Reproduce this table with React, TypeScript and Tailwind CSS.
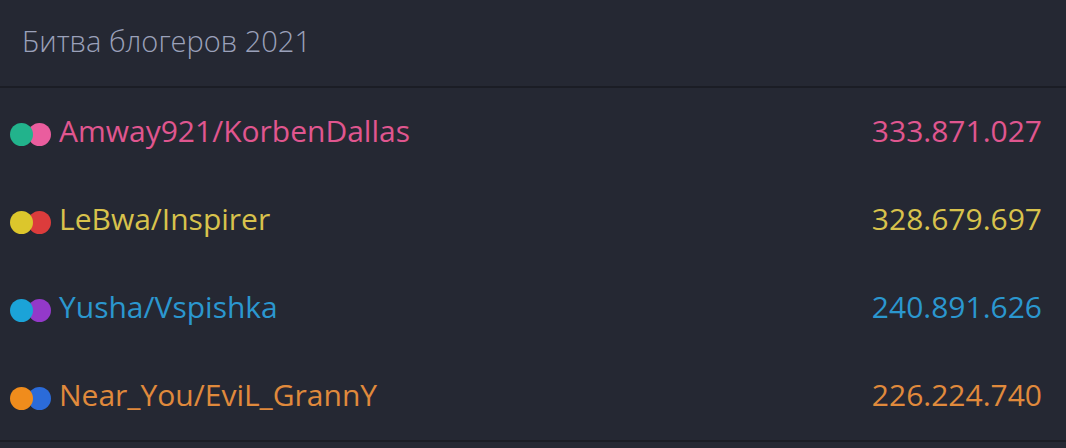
const rows = [
  { name: "Amway921/KorbenDallas", votes: "333.871.027", text: "text-[#e0568f]", a: "bg-[#22b38c]", b: "bg-[#ea5d9e]" },
  { name: "LeBwa/Inspirer", votes: "328.679.697", text: "text-[#d8c24c]", a: "bg-[#dcc62c]", b: "bg-[#dc3c3c]" },
  { name: "Yusha/Vspishka", votes: "240.891.626", text: "text-[#2b97cf]", a: "bg-[#1ba3d8]", b: "bg-[#9339c9]" },
  { name: "Near_You/EviL_GrannY", votes: "226.224.740", text: "text-[#e08a3c]", a: "bg-[#f08c1c]", b: "bg-[#2b6bd9]" },
];

export default function App() {
  return (
    <div className="w-[1066px] h-[448px] bg-[#252833] font-['Open_Sans',sans-serif] overflow-hidden">
      <div className="h-[88px] flex items-center pl-[22px] border-b-2 border-[#1b1d25]">
        <h1 className="text-[29px] font-light text-[#9ba1ba] -mt-[4px]">Битва блогеров 2021</h1>
      </div>
      <ul>
        {rows.map((r) => (
          <li key={r.name} className="h-[88px] flex items-center justify-between pl-[10px] pr-[24px]">
            <div className="flex items-center">
              <span className="flex mr-[8px] mt-[4px]">
                <span className={`w-[23px] h-[23px] rounded-full ${r.a} relative z-10`} />
                <span className={`w-[23px] h-[23px] rounded-full ${r.b} -ml-[5px]`} />
              </span>
              <span className={`text-[30px] -mt-[3px] ${r.text}`}>{r.name}</span>
            </div>
            <span className={`text-[30px] -mt-[3px] ${r.text}`}>{r.votes}</span>
          </li>
        ))}
      </ul>
      <div className="border-t-2 border-[#1b1d25]" />
    </div>
  );
}
